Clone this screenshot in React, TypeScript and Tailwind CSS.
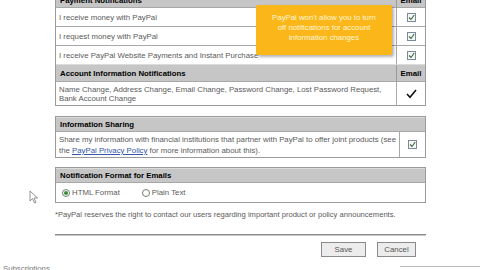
import React from "react";

const Check = () => (
  <div className="w-[9px] h-[9px] border border-[#7a8a9a] bg-[#f4f7f4] flex items-center justify-center">
    <svg width="7" height="7" viewBox="0 0 7 7">
      <path d="M1 3.5 L3 5.5 L6.2 1" fill="none" stroke="#3d663d" strokeWidth="1.1" />
    </svg>
  </div>
);

const Radio = ({ on }: { on?: boolean }) => (
  <div className="w-[8px] h-[8px] rounded-full border border-[#6f7f6f] bg-white flex items-center justify-center">
    {on && <div className="w-[4px] h-[4px] rounded-full bg-[#3a8a3a]" />}
  </div>
);

const Header = ({ children, email, h }: { children: React.ReactNode; email?: boolean; h: string }) => (
  <div className={`flex ${h} bg-[#c6c6c6] border-t border-[#dcdcdc] text-black font-bold`}>
    <div className="flex-1 flex items-center px-[4px]">{children}</div>
    {email && (
      <div className="w-[29px] border-l border-[#9a9a9a] flex items-center justify-center">Email</div>
    )}
  </div>
);

const Row = ({ text }: { text: string }) => (
  <div className="flex h-[19px] border-t border-[#a8a8a8]">
    <div className="flex-1 flex items-center px-[3px]">{text}</div>
    <div className="w-[29px] border-l border-[#a8a8a8] flex items-center justify-center">
      <Check />
    </div>
  </div>
);

export default function App() {
  return (
    <div
      className="relative w-[480px] h-[270px] overflow-hidden bg-white text-[#5a5a5a] text-[7.8px] leading-[9px]"
      style={{ fontFamily: "'Liberation Sans', Arial, sans-serif" }}
    >
      <div className="flex flex-col pl-[55px] w-[426px]">
        {/* Box 1 */}
        <div className="mt-[-8px] border border-[#9a9a9a] border-t-0">
          <Header email h="h-[15px]">Payment Notifications</Header>
          <Row text="I receive money with PayPal" />
          <Row text="I request money with PayPal" />
          <Row text="I receive PayPal Website Payments and Instant Purchase" />
          <Header email h="h-[17px]">Account Information Notifications</Header>
          <div className="flex h-[24px] border-t border-[#a8a8a8]">
            <div className="flex-1 flex flex-col justify-center px-[3px]">
              <div>Name Change, Address Change, Email Change, Password Change, Lost Password Request,</div>
              <div>Bank Account Change</div>
            </div>
            <div className="w-[29px] border-l border-[#a8a8a8] flex items-center justify-center">
              <svg width="11" height="10" viewBox="0 0 11 10">
                <path d="M1 5 L4 8.3 L10 1" fill="none" stroke="#111" strokeWidth="1.6" />
              </svg>
            </div>
          </div>
        </div>

        {/* Box 2 */}
        <div className="mt-[10px] border border-[#9a9a9a]">
          <Header h="h-[14px]">Information Sharing</Header>
          <div className="flex h-[26px] border-t border-[#a8a8a8]">
            <div className="flex-1 flex flex-col justify-center px-[3px] leading-[11px] whitespace-nowrap">
              <div>Share my information with financial institutions that partner with PayPal to offer joint products (see</div>
              <div>
                the <span className="text-[#3355aa] underline">PayPal Privacy Policy</span> for more information about this).
              </div>
            </div>
            <div className="w-[29px] border-l border-[#a8a8a8] flex items-center justify-center">
              <Check />
            </div>
          </div>
        </div>

        {/* Box 3 */}
        <div className="mt-[9px] border border-[#9a9a9a]">
          <Header h="h-[14px]">Notification Format for Emails</Header>
          <div className="flex items-center h-[20px] border-t border-[#a8a8a8] px-[6px] gap-[2px]">
            <Radio on />
            <span className="mr-[20px]">HTML Format</span>
            <Radio />
            <span>Plain Text</span>
          </div>
        </div>

        <div className="mt-[7px] h-[10px] whitespace-nowrap text-[7.6px]">
          *PayPal reserves the right to contact our users regarding important product or policy announcements.
        </div>

        <div className="mt-[14px] h-[2px] bg-[#8a8a8a] border-b border-[#c8c8c8]" />

        <div className="mt-[6px] flex justify-end gap-[11px] pr-[10px]">
          <div className="w-[45px] h-[15px] border border-[#8a8a8a] bg-[#ececec] flex items-center justify-center text-[#555]">
            Save
          </div>
          <div className="w-[39px] h-[15px] border border-[#8a8a8a] bg-[#ececec] flex items-center justify-center text-[#555]">
            Cancel
          </div>
        </div>
      </div>

      {/* Bottom partial strip */}
      <div className="absolute left-[3px] top-[264px] text-[#777] h-[9px]">Subscriptions</div>
      <div className="absolute left-[400px] top-[266px] w-[80px] h-px bg-[#bbb]" />

      {/* Tooltip */}
      <div className="absolute left-[256px] top-[5px] w-[136px] h-[50px] bg-[#fbb719] rounded-[2px] shadow-[2px_2px_3px_rgba(0,0,0,0.3)] flex flex-col items-center justify-center text-[#fff6d8] leading-[10px] pb-[4px]">
        <div>PayPal won't allow you to turn</div>
        <div>off notifications for account</div>
        <div>information changes</div>
      </div>

      {/* Cursor */}
      <svg className="absolute left-[29px] top-[190px]" width="10" height="14" viewBox="0 0 10 14">
        <path d="M1 1 L1 11 L3.5 8.5 L5.5 13 L7 12.3 L5 8 L8.5 8 Z" fill="#fff" stroke="#777" strokeWidth="0.8" />
      </svg>
    </div>
  );
}
